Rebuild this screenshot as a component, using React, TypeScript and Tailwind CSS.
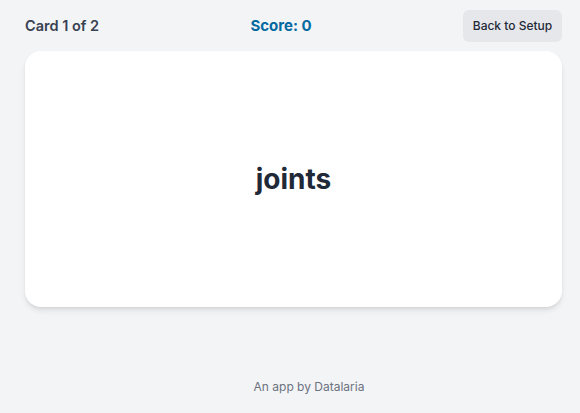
export default function App() {
  return (
    <div className="min-h-screen bg-[#f3f4f6] font-['Inter',sans-serif]">
      <div className="pl-[25px] pr-[18px] pt-[10px]">
        <div className="flex items-center justify-between">
          <span className="text-[14.5px] font-semibold text-[#374151]">Card 1 of 2</span>
          <span className="text-[15px] font-bold text-[#0369a1]">Score: 0</span>
          <button className="h-8 w-[99px] rounded-md bg-[#e5e7eb] text-xs font-medium text-[#1f2937]">
            Back to Setup
          </button>
        </div>

        <div className="mt-[9px] flex h-[256px] items-center justify-center rounded-2xl bg-white shadow-md">
          <h2 className="text-[28px] font-bold text-[#1f2937]">joints</h2>
        </div>
      </div>

      <footer className="mt-[72px] pl-[38px] text-center text-xs text-[#6b7280]">
        An app by Datalaria
      </footer>
    </div>
  );
}
